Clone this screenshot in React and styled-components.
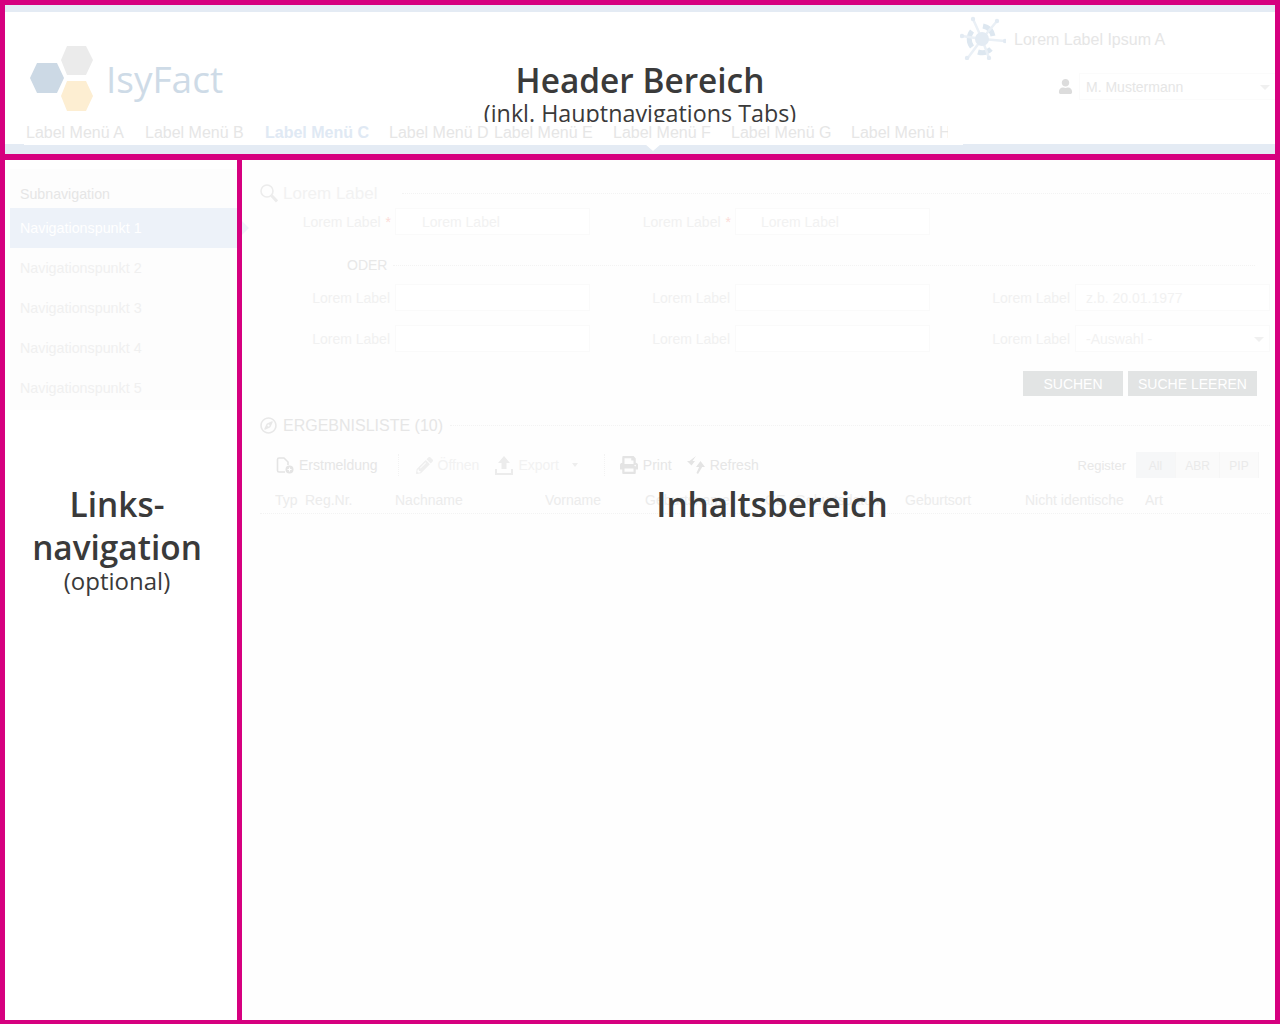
import React from 'react';
import styled, { createGlobalStyle } from 'styled-components';
import { FaPencilAlt, FaPrint, FaRegCompass, FaUser } from 'react-icons/fa';

const GlobalStyle = createGlobalStyle`
  html, body { margin: 0; padding: 0; background: #fff; }
  * { box-sizing: border-box; }
`;

const Frame = styled.div`
  width: 1280px;
  height: 1024px;
  border: 5px solid #d6007f;
  border-bottom-width: 4px;
  display: flex;
  flex-direction: column;
  overflow: hidden;
  font-family: "Liberation Sans", Arial, sans-serif;
  font-size: 14px;
  color: #eee;
`;

/* annotation text */
const Note = styled.div`
  position: absolute;
  z-index: 5;
  text-align: center;
  font-family: "Open Sans", "Noto Sans", sans-serif;
  font-weight: 600;
  color: #3a3a3a;
  font-size: 33.4px;
  line-height: 43px;
`;
const NoteSmall = styled.div`
  font-size: 24px;
  line-height: 30px;
  font-weight: 500;
  margin-top: -3px;
`;
const HeaderNote = styled(Note)`
  left: 0;
  right: 0;
  top: 52px;
  height: 65px;
  overflow: hidden;
  line-height: 46px;
`;
const HeaderSub = styled(NoteSmall)`
  margin-top: -5px;
  font-size: 23.3px;
`;
const SideNote = styled(Note)`
  left: 0;
  width: 224px;
  top: 323px;
`;
const ContentNote = styled(Note)`
  left: 330px;
  width: 400px;
  top: 323px;
`;

/* header */
const Header = styled.header`
  position: relative;
  height: 155px;
  flex: none;
  border-bottom: 6px solid #d6007f;
  display: flex;
  flex-direction: column;
`;
const TopStripe = styled.div`
  height: 7px;
  background: #e4ebf4;
`;
const Masthead = styled.div`
  flex: 1;
  display: flex;
  justify-content: space-between;
  min-height: 0;
`;
const Logo = styled.div`
  display: flex;
  align-items: center;
  gap: 12px;
  padding: 32px 0 0 23px;
  height: 100px;
`;
const LogoText = styled.span`
  font-family: "Open Sans", "Noto Sans", sans-serif;
  font-size: 37px;
  color: #cedbe7;
  margin-top: 0;
`;
const MastRight = styled.div`
  width: 315px;
  display: flex;
  flex-direction: column;
`;
const Emblem = styled.div`
  display: flex;
  align-items: center;
  gap: 8px;
  height: 44px;
  margin-top: 4px;
  font-size: 16px;
  line-height: 48px;
  color: #e6e6e6;
`;
const EmblemLabel = styled.span`
  margin-top: 4px;
`;
const UserRow = styled.div`
  display: flex;
  align-items: center;
  gap: 6px;
  margin: 13px 0 0 98px;
  color: #dcdcdc;
  font-size: 15px;
`;
const UserSelect = styled.div`
  position: relative;
  flex: 1;
  height: 27px;
  padding-left: 6px;
  border: 1px solid #fbfbfb;
  border-right: 0;
  font-size: 14px;
  line-height: 27px;
  color: #e6e6e6;
`;
const SelectCaret = styled.span`
  position: absolute;
  right: 5px;
  top: 11px;
  border-style: solid;
  border-width: 5px 5px 0;
  border-color: #f0f0f0 transparent transparent;
`;
const Tabs = styled.nav`
  display: flex;
  position: relative;
  z-index: 6;
  width: 939px;
  height: 23px;
  margin: 0 0 -1px 19px;
  padding-left: 2px;
  background: #fff;
`;
const Tab = styled.div`
  width: ${(p) => p.$w}px;
  flex: none;
  overflow: hidden;
  white-space: nowrap;
  font-size: 16px;
  line-height: 22px;
  font-weight: ${(p) => (p.$active ? 700 : 400)};
  color: ${(p) => (p.$active ? '#e0e9f4' : '#e6e6e6')};
`;
const NavBar = styled.div`
  position: relative;
  height: 10px;
  flex: none;
  background: #e4ebf4;
`;
const NavCaret = styled.span`
  position: absolute;
  z-index: 7;
  left: 640px;
  top: 0;
  border-style: solid;
  border-width: 7px 8px 0;
  border-color: #fff transparent transparent;
`;

/* lower part */
const Body = styled.div`
  flex: 1;
  display: flex;
  min-height: 0;
`;
const Side = styled.aside`
  position: relative;
  width: 237px;
  flex: none;
  padding: 9px 0 0 5px;
  border-right: 5px solid #d6007f;
`;
const SideCaret = styled.span`
  position: absolute;
  z-index: 2;
  left: 237px;
  top: 61px;
  border-style: solid;
  border-width: 7px 0 7px 7px;
  border-color: transparent transparent transparent #edf2f9;
`;
const SidePanel = styled.div`
  background: #fdfdfd;
  height: 241px;
`;
const SideTitle = styled.div`
  height: 39px;
  padding: 17px 0 0 10px;
  line-height: 16px;
  font-size: 14.2px;
  color: #e6e6e6;
`;
const SideItem = styled.div`
  height: 40px;
  padding-left: 10px;
  line-height: 41px;
  font-size: 14.3px;
  background: ${(p) => (p.$active ? '#edf2f9' : 'transparent')};
  color: ${(p) => (p.$active ? '#fff' : '#f0f0f0')};
`;

const Content = styled.main`
  position: relative;
  flex: 1;
  background: #fefefe;
  padding: 21px 5px 0 0;
`;
const SectionHead = styled.div`
  display: flex;
  align-items: center;
  height: 24px;
  padding: 1px 0 0 18px;
  gap: ${(p) => (p.$upper ? 6 : 5)}px;
  color: ${(p) => (p.$upper ? '#e6e6e6' : '#f2f2f2')};
  font-size: ${(p) => (p.$upper ? 16 : 17)}px;
  margin-bottom: ${(p) => p.$mb}px;
`;
const Dots = styled.span`
  flex: 1;
  margin-left: ${(p) => p.$ml || 0}px;
  border-top: 1px dotted #f3f3f3;
`;
const Row = styled.div`
  display: flex;
  padding-left: 8px;
  margin-bottom: ${(p) => p.$mb}px;
`;
const Field = styled.div`
  width: 340px;
  display: flex;
  align-items: center;
  gap: 5px;
`;
const Label = styled.label`
  flex: 1;
  text-align: right;
  color: #f1f1f1;
  white-space: nowrap;
`;
const Star = styled.span`
  color: #fbdcd8;
  margin: 0 -1px 0 5px;
`;
const InputBox = styled.div`
  position: relative;
  width: 195px;
  height: 27px;
  border: 1px solid #fafafa;
  line-height: 27px;
  color: #f2f2f2;
  padding-left: ${(p) => p.$pad || 10}px;
  background: #fff;
`;
const OderRow = styled.div`
  display: flex;
  align-items: center;
  height: 20px;
  margin-bottom: 9px;
  padding: 0 15px 0 105px;
  gap: 6px;
  color: #e8e8e8;
`;
const ButtonRow = styled.div`
  display: flex;
  justify-content: flex-end;
  gap: 5px;
  padding-right: 13px;
  margin-bottom: 17px;
`;
const Button = styled.button`
  width: ${(p) => p.$w}px;
  height: 25px;
  padding: 0;
  border: none;
  background: #e2e4e4;
  color: #fff;
  font: 14px "Liberation Sans", Arial, sans-serif;
`;
const Toolbar = styled.div`
  display: flex;
  align-items: center;
  height: 26px;
  padding: 0 11px 0 34px;
  margin: 15px 0 9px;
  color: #e8e8e8;
`;
const ToolItem = styled.span`
  display: flex;
  align-items: center;
  gap: 5px;
  margin-right: ${(p) => p.$mr || 0}px;
  color: ${(p) => (p.$dim ? '#f2f2f2' : '#e6e6e6')};
`;
const ToolSep = styled.span`
  height: 22px;
  border-left: 1px dotted #f3f3f3;
  margin-right: ${(p) => p.$mr}px;
`;
const Register = styled.div`
  margin-left: auto;
  display: flex;
  align-items: center;
  gap: 10px;
  font-size: 13px;
`;
const Segments = styled.div`
  display: flex;
  height: 26px;
  background: #fafafa;
`;
const Segment = styled.span`
  width: ${(p) => p.$w}px;
  text-align: center;
  line-height: 28px;
  font-size: 12px;
  color: #eaeaea;
  background: ${(p) => (p.$active ? '#f6f7f8' : 'transparent')};
  border-right: 1px solid #f6f6f6;
`;
const TableHead = styled.div`
  display: flex;
  height: 27px;
  margin-left: 18px;
  padding-left: 15px;
  border-bottom: 1px dotted #f3f3f3;
  color: #ececec;
  line-height: 27px;
`;
const Col = styled.span`
  width: ${(p) => p.$w}px;
  flex: none;
  white-space: nowrap;
  overflow: hidden;
`;
const SmallCaret = styled.span`
  margin-left: 8px;
  border-style: solid;
  border-width: 4px 3.5px 0;
  border-color: #eeeeee transparent transparent;
`;

const tabs = [
  ['Label Menü A', 119], ['Label Menü B', 120], ['Label Menü C', 124, true], ['Label Menü D', 105],
  ['Label Menü E', 119], ['Label Menü F', 118], ['Label Menü G', 120], ['Label Menü H', 97],
];
const columns = [
  ['Typ', 30], ['Reg.Nr.', 90], ['Nachname', 150], ['Vorname', 100], ['Geburtsname', 120],
  ['GE', 30], ['Geburtsdatum', 110], ['Geburtsort', 120], ['Nicht identische', 120], ['Art', 60],
];

const Hexagons = () => (
  <svg width="66" height="67" viewBox="0 0 66 67">
    <polygon points="33,15 39,1 58,1 65,15 58,30 39,30" fill="#ebebeb" />
    <polygon points="2,33 9,18 29,18 36,33 29,48 9,48" fill="#ccd9e5" />
    <polygon points="33,51 39,36 58,36 65,51 58,66 39,66" fill="#fdeed2" />
  </svg>
);

const EmblemIcon = () => (
  <svg width="46" height="44" viewBox="0 0 46 44" fill="none">
    <g stroke="#dde7f0" strokeWidth="5">
      <path d="M12 15A13 13 0 0 0 12 31" />
      <path d="M23 10A13 13 0 0 1 33 20" />
      <path d="M18 36A13 13 0 0 0 31 33" />
    </g>
    <g stroke="#eaf0f6" strokeWidth="2.5" strokeLinecap="round">
      <path d="M13 3L22 23M37 5L22 23M45 25L22 23M7 43L22 23M29 42L22 23M2 20L22 23" />
    </g>
    <g fill="#e3ebf3">
      <circle cx="22" cy="23" r="7" />
      <circle cx="13" cy="3" r="2.2" />
      <circle cx="37" cy="5" r="2.2" />
      <circle cx="45" cy="25" r="2.2" />
      <circle cx="7" cy="42" r="2.2" />
      <circle cx="29" cy="42" r="2.2" />
      <circle cx="2" cy="20" r="2.2" />
    </g>
  </svg>
);

const SearchIcon = () => (
  <svg width="18" height="19" viewBox="0 0 18 19" fill="none" stroke="#ececec">
    <circle cx="7" cy="7" r="6" strokeWidth="1.6" />
    <path d="M11.5 11.5l5.5 6" strokeWidth="3" />
  </svg>
);
const NewFileIcon = () => (
  <svg width="18" height="18" viewBox="0 0 18 18" fill="none" stroke="#e4e4e4" strokeWidth="1.6">
    <path d="M9 16H3a1.5 1.5 0 0 1-1.5-1.5v-11A1.5 1.5 0 0 1 3 2h5l4 4v3" />
    <circle cx="13.5" cy="13.5" r="4" fill="#e4e4e4" stroke="none" />
    <path d="M13.5 11.5v4M11.5 13.5h4" stroke="#fff" strokeWidth="1.2" />
  </svg>
);
const UploadIcon = () => (
  <svg width="18" height="19" viewBox="0 0 18 19" fill="#ececec">
    <path d="M9 0l6 7h-3.5v6h-5V7H3z" />
    <path d="M0 13h2v4h14v-4h2v6H0z" />
  </svg>
);
const RefreshIcon = () => (
  <svg width="18" height="18" viewBox="0 0 18 18" fill="#e4e4e4">
    <path d="M9 0L5.5 5H8L4.5 9.5 0 5h2.5z" />
    <path d="M13.5 5L18 11h-2.8L11 18l-1.5-1 2.6-6H9z" />
  </svg>
);

const App = () => (
  <Frame>
    <GlobalStyle />
    <Header>
      <HeaderNote>
        Header Bereich
        <HeaderSub>(inkl. Hauptnavigations Tabs)</HeaderSub>
      </HeaderNote>
      <TopStripe />
      <Masthead>
        <Logo>
          <Hexagons />
          <LogoText>IsyFact</LogoText>
        </Logo>
        <MastRight>
          <Emblem>
            <EmblemIcon />
            <EmblemLabel>Lorem Label Ipsum A</EmblemLabel>
          </Emblem>
          <UserRow>
            <FaUser size={15} />
            <UserSelect>
              M. Mustermann
              <SelectCaret />
            </UserSelect>
          </UserRow>
        </MastRight>
      </Masthead>
      <Tabs>
        {tabs.map(([label, w, active]) => (
          <Tab key={label} $w={w} $active={active}>{label}</Tab>
        ))}
      </Tabs>
      <NavBar>
        <NavCaret />
      </NavBar>
    </Header>
    <Body>
      <Side>
        <SideNote>
          Links-
          <br />
          navigation
          <NoteSmall>(optional)</NoteSmall>
        </SideNote>
        <SideCaret />
        <SidePanel>
          <SideTitle>Subnavigation</SideTitle>
          {[1, 2, 3, 4, 5].map((n) => (
            <SideItem key={n} $active={n === 1}>Navigationspunkt {n}</SideItem>
          ))}
        </SidePanel>
      </Side>
      <Content>
        <ContentNote>Inhaltsbereich</ContentNote>
        <SectionHead $mb={3}>
          <SearchIcon />
          Lorem Label
          <Dots $ml={19} />
        </SectionHead>
        <Row $mb={20}>
          <Field>
            <Label>Lorem Label<Star>*</Star></Label>
            <InputBox $pad={26}>Lorem Label</InputBox>
          </Field>
          <Field>
            <Label>Lorem Label<Star>*</Star></Label>
            <InputBox $pad={25}>Lorem Label</InputBox>
          </Field>
        </Row>
        <OderRow>ODER<Dots /></OderRow>
        <Row $mb={14}>
          <Field><Label>Lorem Label</Label><InputBox /></Field>
          <Field><Label>Lorem Label</Label><InputBox /></Field>
          <Field><Label>Lorem Label</Label><InputBox>z.b. 20.01.1977</InputBox></Field>
        </Row>
        <Row $mb={19}>
          <Field><Label>Lorem Label</Label><InputBox /></Field>
          <Field><Label>Lorem Label</Label><InputBox /></Field>
          <Field>
            <Label>Lorem Label</Label>
            <InputBox>-Auswahl -<SelectCaret /></InputBox>
          </Field>
        </Row>
        <ButtonRow>
          <Button $w={100}>SUCHEN</Button>
          <Button $w={129}>SUCHE LEEREN</Button>
        </ButtonRow>
        <SectionHead $upper $mb={0}>
          <FaRegCompass size={17} color="#e8e8e8" />
          ERGEBNISLISTE (10)
          <Dots $ml={1} />
        </SectionHead>
        <Toolbar>
          <ToolItem $mr={20}><NewFileIcon />Erstmeldung</ToolItem>
          <ToolSep $mr={17} />
          <ToolItem $dim $mr={16}><FaPencilAlt size={17} color="#efefef" />Öffnen</ToolItem>
          <ToolItem $dim $mr={26}><UploadIcon />Export<SmallCaret /></ToolItem>
          <ToolSep $mr={15} />
          <ToolItem $mr={15}><FaPrint size={18} color="#e4e4e4" />Print</ToolItem>
          <ToolItem><RefreshIcon />Refresh</ToolItem>
          <Register>
            Register
            <Segments>
              <Segment $active $w={40}>All</Segment>
              <Segment $w={44}>ABR</Segment>
              <Segment $w={39}>PIP</Segment>
            </Segments>
          </Register>
        </Toolbar>
        <TableHead>
          {columns.map(([label, w]) => (
            <Col key={label} $w={w}>{label}</Col>
          ))}
        </TableHead>
      </Content>
    </Body>
  </Frame>
);

export default App;
